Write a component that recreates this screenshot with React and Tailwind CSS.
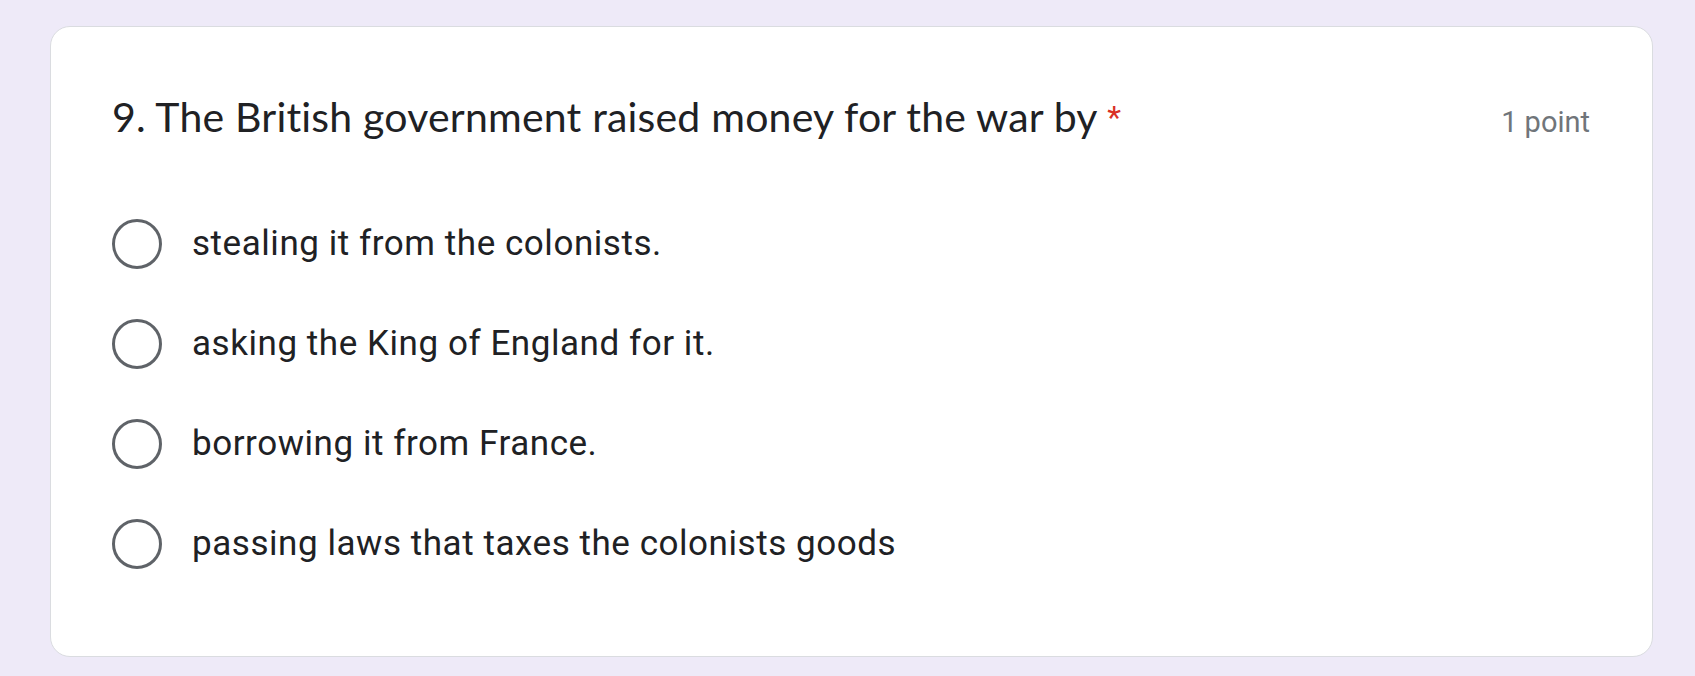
const options = [
  "stealing it from the colonists.",
  "asking the King of England for it.",
  "borrowing it from France.",
  "passing laws that taxes the colonists goods",
];

function Radio() {
  return (
    <span className="block w-[50px] h-[50px] shrink-0 rounded-full border-[3.5px] border-[#5f6368]"></span>
  );
}

export default function App() {
  return (
    <div className="min-h-[676px] bg-[#eeeaf8] pt-[26px] pl-[50px] pr-[42px] pb-[21px]">
      <div className="bg-white rounded-[20px] border border-[#dadce0] pl-[61px] pr-[62px] pt-[66px] pb-[62px]">
        {/* Question title */}
        <div className="flex items-baseline justify-between h-[48px]">
          <h2 className="text-[#202124] text-[41px] leading-[48px] font-['Lato',sans-serif] tracking-[0.2px] [font-variant-ligatures:none]">
            9. The British government raised money for the war by{" "}
            <span className="text-[#d93025] text-[32px] font-['Roboto',sans-serif] align-top">*</span>
          </h2>
          <span className="text-[#70757a] text-[29px] font-['Roboto',sans-serif]">1 point</span>
        </div>

        {/* Answer choices */}
        <div className="mt-[53px] flex flex-col">
          {options.map((opt) => (
            <label key={opt} className="h-[100px] flex items-center gap-[30px]">
              <Radio />
              <span className="text-[#202124] text-[35px] leading-[40px] font-['Roboto',sans-serif] tracking-[0.55px]">
                {opt}
              </span>
            </label>
          ))}
        </div>
      </div>
    </div>
  );
}
